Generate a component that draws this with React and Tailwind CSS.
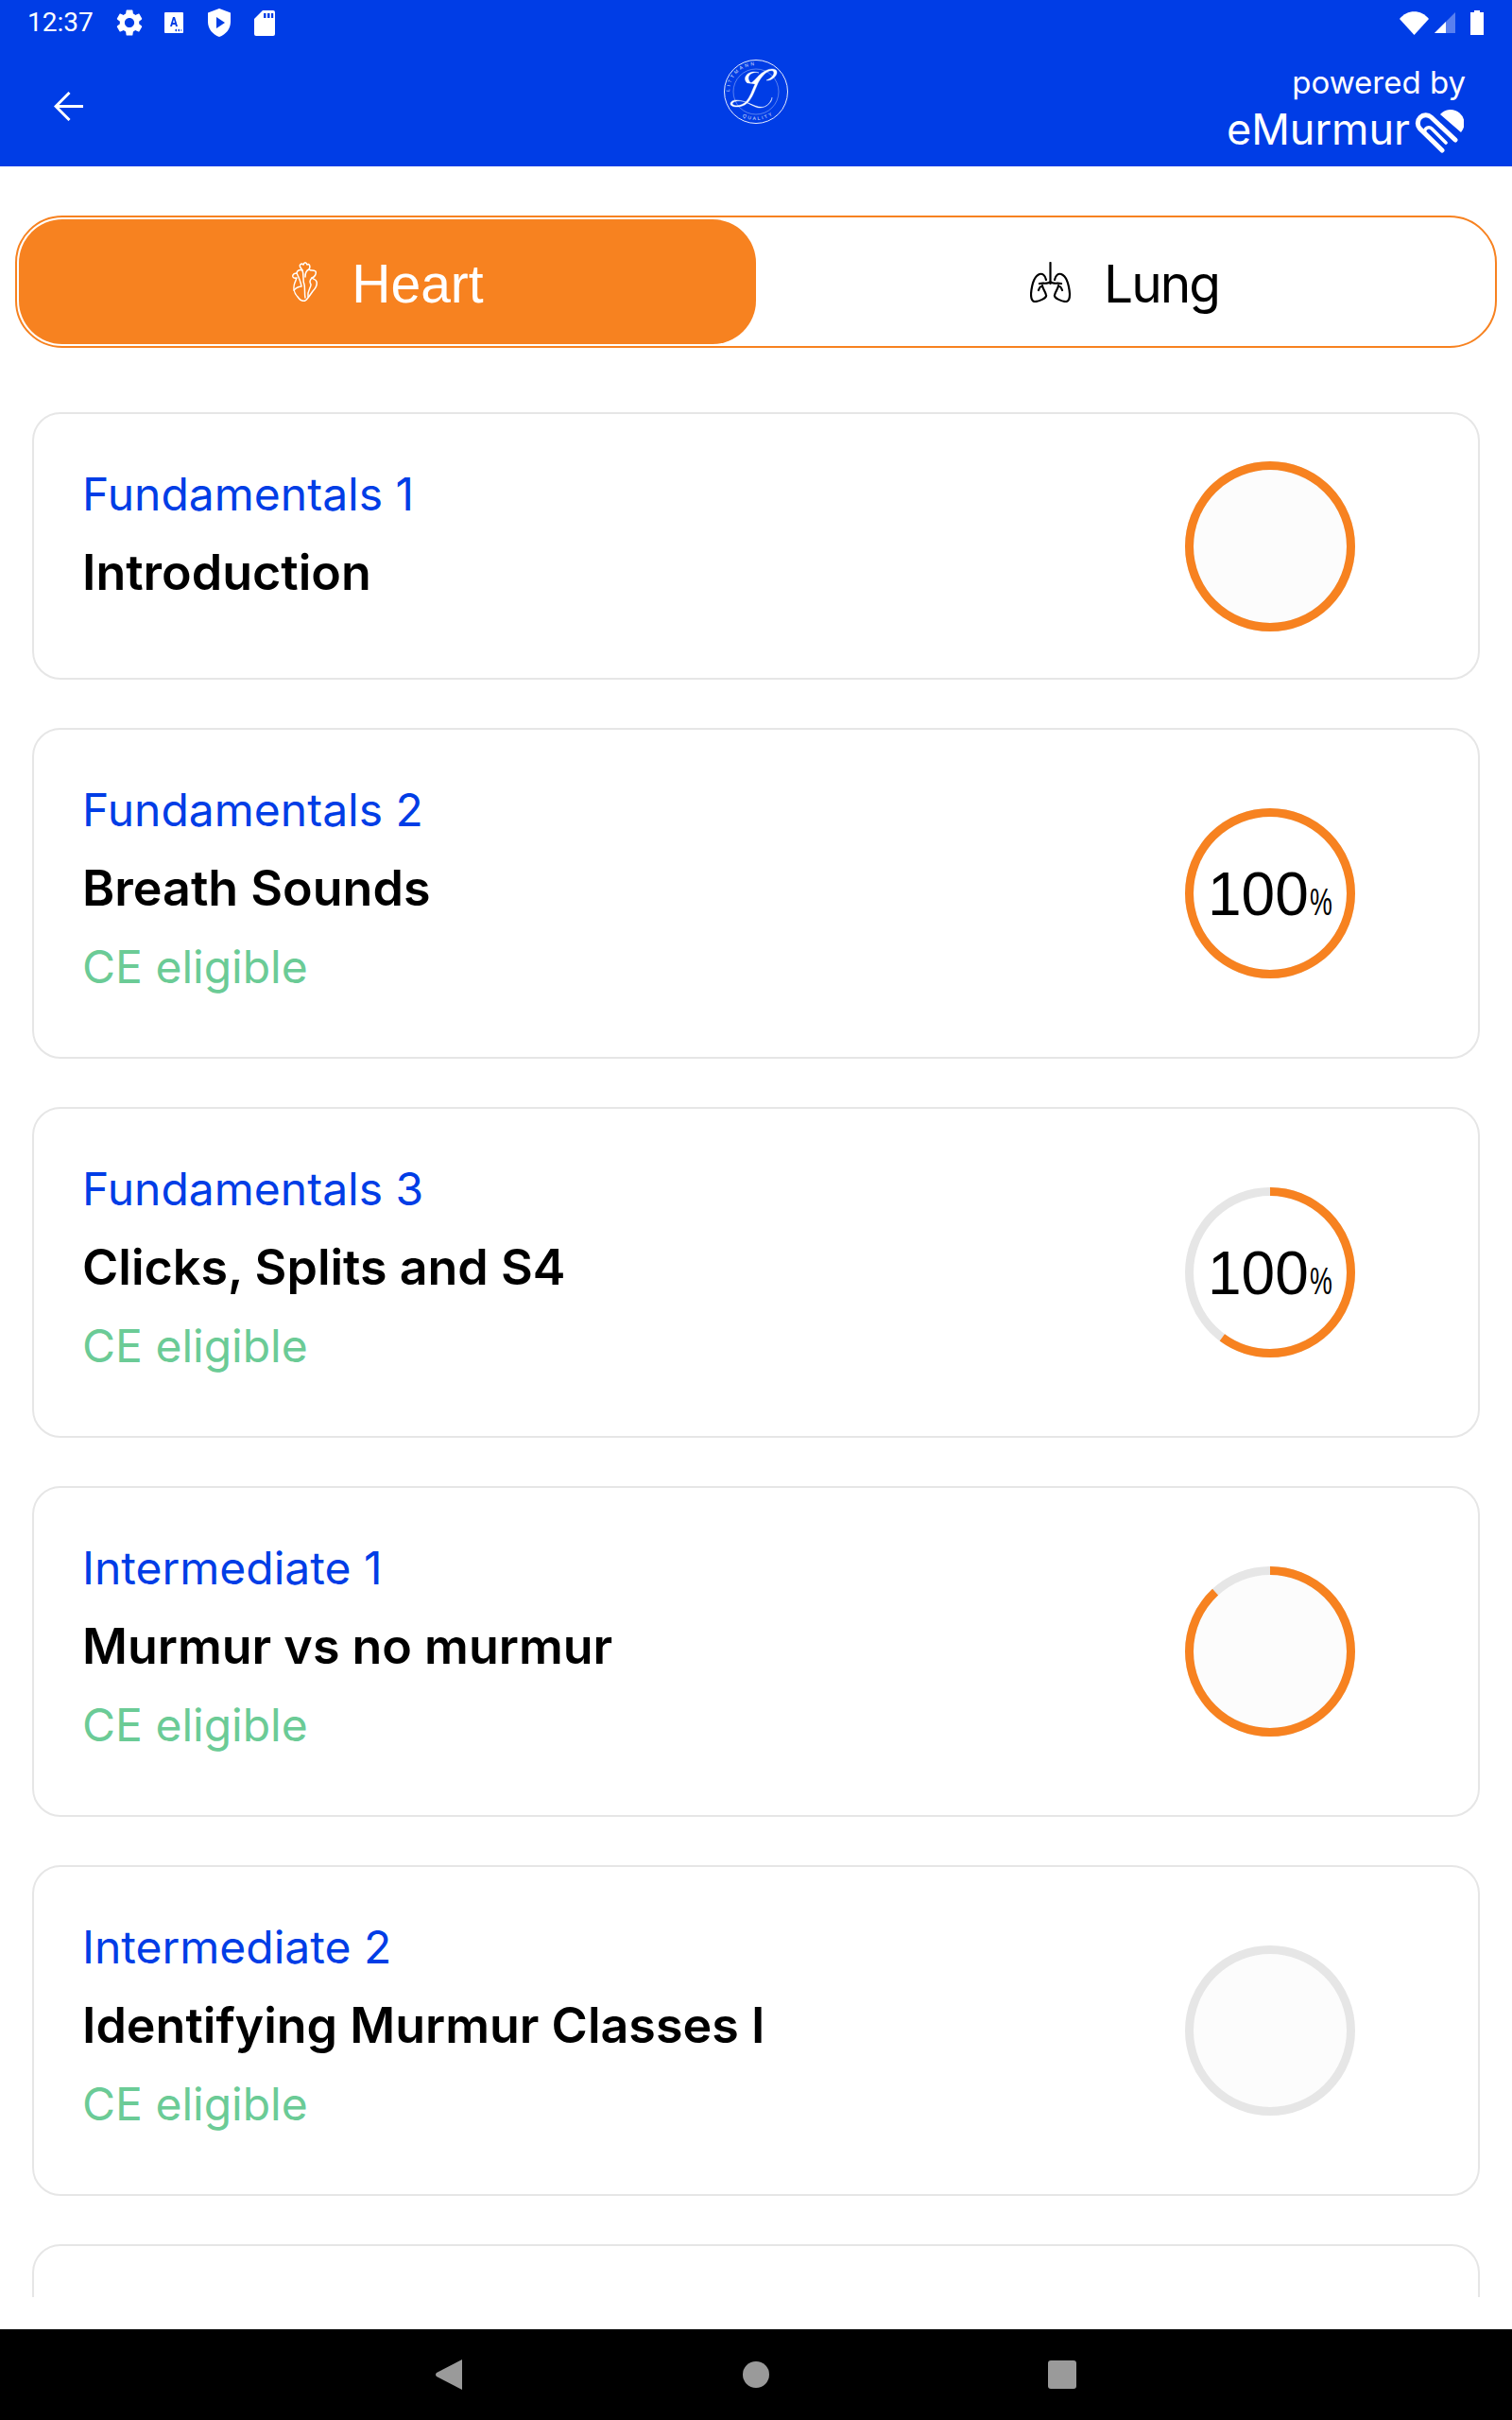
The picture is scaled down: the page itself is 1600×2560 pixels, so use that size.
import React from "react";

const circular = "font-['Inter','Liberation_Sans',sans-serif]";

const courses = [
  { id: 1, level: "Fundamentals 1", name: "Introduction", ce: false, progress: 100, label: false },
  { id: 2, level: "Fundamentals 2", name: "Breath Sounds", ce: true, progress: 100, label: true },
  { id: 3, level: "Fundamentals 3", name: "Clicks, Splits and S4", ce: true, progress: 60, label: true },
  { id: 4, level: "Intermediate 1", name: "Murmur vs no murmur", ce: true, progress: 88, label: false },
  { id: 5, level: "Intermediate 2", name: "Identifying Murmur Classes I", ce: true, progress: 0, label: false },
];

function StatusBar() {
  return (
    <div className="relative flex h-12 items-center justify-between pl-[29px] pr-[30px] text-white">
      <div className="flex items-center">
        <span className="w-[91px] font-['Roboto',sans-serif] text-[28px] leading-none">12:37</span>
        {/* settings */}
        <svg viewBox="0 0 24 24" className="h-[34px] w-[34px]" fill="white">
          <path d="M19.14 12.94c.04-.3.06-.61.06-.94 0-.32-.02-.64-.07-.94l2.03-1.58c.18-.14.23-.41.12-.61l-1.92-3.32c-.12-.22-.37-.29-.59-.22l-2.39.96c-.5-.38-1.03-.7-1.62-.94l-.36-2.54c-.04-.24-.24-.41-.48-.41h-3.84c-.24 0-.43.17-.47.41l-.36 2.54c-.59.24-1.13.57-1.62.94l-2.39-.96c-.22-.08-.47 0-.59.22L2.74 8.87c-.12.21-.08.47.12.61l2.03 1.58c-.05.3-.09.63-.09.94s.02.64.07.94l-2.03 1.58c-.18.14-.23.41-.12.61l1.92 3.32c.12.22.37.29.59.22l2.39-.96c.5.38 1.03.7 1.62.94l.36 2.54c.05.24.24.41.48.41h3.84c.24 0 .44-.17.47-.41l.36-2.54c.59-.24 1.13-.56 1.62-.94l2.39.96c.22.08.47 0 .59-.22l1.92-3.32c.12-.22.07-.47-.12-.61l-2.01-1.58zM12 15.6c-1.98 0-3.6-1.62-3.6-3.6s1.62-3.6 3.6-3.6 3.6 1.62 3.6 3.6-1.62 3.6-3.6 3.6z" />
        </svg>
        {/* a11y box */}
        <svg viewBox="0 0 20 22" className="ml-5 h-[22px] w-5">
          <rect width="20" height="22" rx="1" fill="white" />
          <path d="M6 15 L9 5 H11 L14 15 H12 L11.4 13 H8.6 L8 15 Z M9 11 H11 L10 7.5 Z" fill="#003de6" fillRule="evenodd" />
          <path d="M11 19 h1.5 M14 19 h1.5 M17 19 h1.5 M12.5 17.8 v2.4 M15.5 17.8 v2.4" stroke="#003de6" strokeWidth="1" />
        </svg>
        {/* play protect */}
        <svg viewBox="0 0 24 30" className="ml-[26px] h-[30px] w-6">
          <path d="M12 0 L24 4.5 V14 C24 21.5 19 27.5 12 30 C5 27.5 0 21.5 0 14 V4.5 Z" fill="white" />
          <path d="M9 9 L18 15 L9 21 Z" fill="#003de6" />
        </svg>
        {/* sd card */}
        <svg viewBox="0 0 22 27" className="ml-[25px] h-[27px] w-[22px]">
          <path d="M9 0 H20 Q22 0 22 2 V25 Q22 27 20 27 H2 Q0 27 0 25 V9 Z" fill="white" />
          <path d="M10 3 h2.5 v5 h-2.5 z M14 3 h2.5 v5 h-2.5 z M18 3 h2.2 v5 h-2.2 z" fill="#003de6" />
        </svg>
      </div>
      <div className="flex items-center">
        <svg viewBox="0 0 31 25" className="h-[25px] w-[31px]">
          <path d="M0 8 C8 -2.5 23 -2.5 31 8 L15.5 25 Z" fill="white" />
        </svg>
        <svg viewBox="0 0 22 22" className="ml-1.5 h-[22px] w-[22px]">
          <path d="M0 22 L22 0 V22 Z" fill="white" fillOpacity="0.35" />
          <path d="M0 22 L12 10 V22 Z" fill="white" />
        </svg>
        <svg viewBox="0 0 14 26" className="ml-4 h-[26px] w-3.5">
          <path d="M4 0 H10 V2 H14 V26 H0 V2 H4 Z" fill="white" />
        </svg>
      </div>
    </div>
  );
}

function LittmannLogo() {
  return (
    <svg viewBox="0 0 70 70" className="h-[70px] w-[70px]" fill="none">
      <circle cx="35" cy="35" r="33.5" stroke="white" strokeWidth="0.9" />
      <circle cx="35" cy="35" r="24" stroke="white" strokeWidth="0.5" opacity="0.7" />
      <defs>
        <path id="ringTop" d="M7 35 A28 28 0 0 1 63 35" />
        <path id="ringBottom" d="M5 35 A30 30 0 0 0 65 35" />
      </defs>
      <text fill="white" fontSize="5" letterSpacing="2.4" fontFamily="Liberation Sans" opacity="0.85">
        <textPath href="#ringTop">LITTMANN</textPath>
      </text>
      <text fill="white" fontSize="5" letterSpacing="2" fontFamily="Liberation Sans" opacity="0.85">
        <textPath href="#ringBottom" startOffset="32">QUALITY</textPath>
      </text>
      {/* script L */}
      <path
        d="M26 26 C19 20 28 11 38 15 C33 13 24 17 28 24 C30 28 33 23 38 18 C43 13 51 9 56 12 C60 16 52 24 46 23 C51 21 56 16 53 13 C48 11 41 18 37 26 C33 35 30 45 23 49 C18 52 7 52 8 47 C10 42 19 44 27 47 C34 50 41 53 46 50 C51 47 52 43 52 41 C51 46 46 52 39 52 C33 52 27 46 20 45 C14 44 10 46 10 48 C12 51 20 50 24 46 C29 41 31 33 34 27"
        fill="white"
        stroke="white"
        strokeWidth="0.4"
      />
    </svg>
  );
}

function MurmurHeart() {
  return (
    <svg viewBox="0 0 60 50" className="-ml-[3px] h-[50px] w-[60px]" fill="none" stroke="white" strokeLinecap="round">
      <path d="M37 47 L13.5 24 A8.5 8.5 0 0 1 25.5 12 L51 36" strokeWidth="5" />
      <path d="M32 42 L20 30 A4 4 0 0 1 26 24 L41 39" strokeWidth="3.6" />
      <path d="M35 9 A14.5 14.5 0 0 1 57 28 Z" fill="white" stroke="none" />
    </svg>
  );
}

function HeartIcon() {
  return (
    <svg viewBox="0 0 30 42" className="h-[42px] w-[30px]" fill="none" stroke="white" strokeWidth="1.5" strokeLinecap="round" strokeLinejoin="round">
      <path d="M4 22 C2 27 3 33 7 37 C9 40 12 42 15 41 C18 39 20 35 23 31 C26 28 28 25 27 21 C26 18 24 19 22 17 C25 16 27 13 26 10 C23 8 21 10 19 8 C21 5 19 1 17 3 C16 0 14 0 13 3 C11 1 8 3 10 6 L12 9 C9 8 6 9 6 12 C4 12 1 13 2 16 C3 18 5 17 6 17 C5 19 5 20 4 22" />
      <path d="M6 12 C8 16 10 20 11 26 C8 26 5 28 3 30" />
      <path d="M12 9 C14 14 12 20 14 24 C15 28 14 33 15 38" />
      <path d="M19 8 C16 9 15 12 15 16" />
      <path d="M22 17 C20 19 19 21 21 24 C21 28 17 30 18 37" />
    </svg>
  );
}

function LungIcon() {
  return (
    <svg viewBox="0 0 44 43" className="h-[43px] w-11" fill="none" stroke="black" strokeWidth="2.2" strokeLinecap="round" strokeLinejoin="round">
      <path d="M21.5 1 V23 M21.5 21 C19 24 14 22 10 23 M21.5 21 C24 24 29 22 33 23" />
      <path d="M17 19 C16 14 13 12 10 13 C5 15 2 22 1 34 C1 41 3 42 5 42 C10 42 18 38 17 35 C16 31 13 28 13 25 M9 30 C10 27 11 26 12 26" />
      <path d="M26 19 C27 14 30 12 33 13 C38 15 41 22 42 34 C42 41 40 42 38 42 C33 42 25 38 26 35 C27 31 30 28 30 25 M34 30 C33 27 32 26 31 26" />
    </svg>
  );
}

function ProgressRing({ progress, label }) {
  const r = 85.5;
  const c = 2 * Math.PI * r;
  return (
    <div className="relative h-[180px] w-[180px]">
      <svg viewBox="0 0 180 180" className="h-full w-full -rotate-90" fill="none">
        <circle cx="90" cy="90" r={r} fill={label ? "#ffffff" : "#fcfcfc"} stroke="#e6e6e6" strokeWidth="9" />
        {progress > 0 && (
          <circle cx="90" cy="90" r={r} stroke="#f78220" strokeWidth="9" strokeDasharray={`${(c * progress) / 100} ${c}`} />
        )}
      </svg>
      {label && (
        <div className="absolute inset-0 flex items-baseline pl-6 pt-[59px] font-['Liberation_Sans',sans-serif] text-black">
          <span className="text-[64px] leading-[64px]">100</span>
          <span className="ml-px inline-block origin-left scale-x-[0.67] text-[40px] leading-[40px]">%</span>
        </div>
      )}
    </div>
  );
}

function CourseCard({ course }) {
  return (
    <div className={`flex shrink-0 items-center justify-between rounded-[30px] border-2 border-[#e6e6e6] bg-white pl-[51px] pr-[130px] ${course.ce ? "h-[350px]" : "h-[283px]"}`}>
      <div className={`flex flex-col self-start pt-[55px] ${circular}`}>
        <span className="text-[48px] leading-[60px] text-[#003de6]">{course.level}</span>
        <span className="mt-[23px] text-[52px] font-semibold leading-[60px] text-black">{course.name}</span>
        {course.ce && <span className="mt-[23px] text-[48px] leading-[60px] text-[#6bcb96]">CE eligible</span>}
      </div>
      <ProgressRing progress={course.progress} label={course.label} />
    </div>
  );
}

export default function App() {
  return (
    <div className="flex h-[2560px] w-[1600px] flex-col overflow-hidden bg-white">
      <header className="h-[176px] shrink-0 bg-[#003de6] text-white">
        <StatusBar />
        <div className="grid h-[128px] grid-cols-[1fr_auto_1fr] items-start px-[49px]">
          <svg viewBox="0 0 31 31" className="ml-2 mt-[49px] h-[31px] w-[31px]" fill="none" stroke="white" strokeWidth="3">
            <path d="M31 15.5 H2 M16.5 1 L2 15.5 L16.5 30" />
          </svg>
          <div className="mt-[14px]">
            <LittmannLogo />
          </div>
          <div className={`flex flex-col items-end pt-[14px] ${circular}`}>
            <span className="text-[33px] leading-[50px]">powered by</span>
            <div className="mr-0.5 flex items-end">
              <span className="text-[45px] leading-[50px]">eMurmur</span>
              <MurmurHeart />
            </div>
          </div>
        </div>
      </header>

      <main className="flex min-h-0 flex-1 flex-col px-4 pb-[34px] pt-[52px]">
        <div className="flex h-[140px] shrink-0 rounded-[50px] border-2 border-[#f78220] p-0.5">
          <div className="flex flex-1 items-center justify-center gap-[34px] rounded-[46px] bg-[#f78220] font-['Liberation_Sans',sans-serif] text-[57px] text-white">
            <HeartIcon />
            <span className="pt-[5px]">Heart</span>
          </div>
          <div className={`flex flex-1 items-center justify-center gap-[34px] text-[55px] tracking-[-2px] text-black ${circular}`}>
            <LungIcon />
            <span className="pt-[5px]">Lung</span>
          </div>
        </div>

        <div className="mt-[68px] flex min-h-0 flex-1 flex-col gap-[51px] overflow-hidden px-[18px]">
          {courses.map((course) => (
            <CourseCard key={course.id} course={course} />
          ))}
          <div className="h-[100px] shrink-0 rounded-[30px] border-2 border-[#e6e6e6]" />
        </div>
      </main>

      <nav className="flex h-24 shrink-0 items-center justify-center bg-black">
        <svg viewBox="0 0 28 32" className="h-8 w-7">
          <path d="M28 0 V32 L1 18 Q-1 16 1 14 Z" fill="#9a9a9a" />
        </svg>
        <div className="ml-[297px] h-7 w-7 rounded-full bg-[#9a9a9a]" />
        <div className="ml-[295px] h-[30px] w-[30px] rounded-[3px] bg-[#9a9a9a]" />
      </nav>
    </div>
  );
}
